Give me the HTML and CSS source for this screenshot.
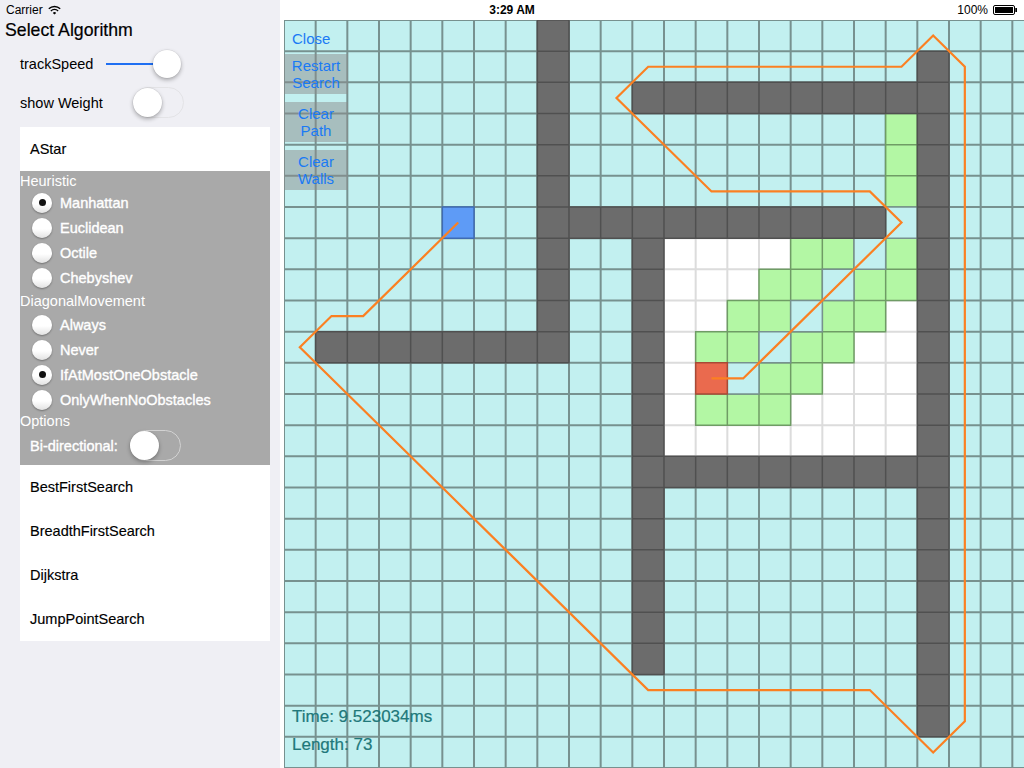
FILE: index.html
```html
<!DOCTYPE html>
<html lang="en">
<head>
<meta charset="utf-8">
<title>Select Algorithm</title>
<link rel="stylesheet" href="styles.css">
</head>
<body>
<div class="status">
  <div class="st-left">
    <span>Carrier</span>
    <svg class="wifi" width="13" height="10" viewBox="0 0 13 10">
      <path d="M6.5 9.6L4.8 7.9a2.4 2.4 0 0 1 3.4 0z" fill="#000"/>
      <path d="M2.9 5.9a5.1 5.1 0 0 1 7.2 0" fill="none" stroke="#000" stroke-width="1.4"/>
      <path d="M0.8 3.8a8.1 8.1 0 0 1 11.4 0" fill="none" stroke="#000" stroke-width="1.4"/>
    </svg>
  </div>
  <div class="st-time">3:29 AM</div>
  <div class="st-right">
    <span>100%</span>
    <svg width="25" height="10" viewBox="0 0 25 10">
      <rect x="0.5" y="0.5" width="21" height="9" rx="1.5" fill="none" stroke="#000"/>
      <rect x="2" y="2" width="18" height="6" fill="#000"/>
      <rect x="22.3" y="3" width="1.7" height="4" fill="#000"/>
    </svg>
  </div>
</div>

<div class="app">
  <aside class="sidebar">
    <h1 class="title">Select Algorithm</h1>
    <div class="ctl ctl-speed">
      <span class="lbl lbl-speed">trackSpeed</span>
      <div class="slider"><div class="slider-track"></div><div class="thumb"></div></div>
    </div>
    <div class="ctl ctl-weight">
      <span class="lbl lbl-weight">show Weight</span>
      <div class="switch"><div class="knob"></div></div>
    </div>

    <div class="card">
      <div class="algo">AStar</div>
      <div class="opts">
        <div class="sec sec-first">Heuristic</div>
        <div class="radio-row"><span class="radio on"></span><span class="opt">Manhattan</span></div>
        <div class="radio-row"><span class="radio"></span><span class="opt">Euclidean</span></div>
        <div class="radio-row"><span class="radio"></span><span class="opt">Octile</span></div>
        <div class="radio-row"><span class="radio"></span><span class="opt">Chebyshev</span></div>
        <div class="sec">DiagonalMovement</div>
        <div class="radio-row"><span class="radio"></span><span class="opt">Always</span></div>
        <div class="radio-row"><span class="radio"></span><span class="opt">Never</span></div>
        <div class="radio-row"><span class="radio on"></span><span class="opt">IfAtMostOneObstacle</span></div>
        <div class="radio-row"><span class="radio"></span><span class="opt">OnlyWhenNoObstacles</span></div>
        <div class="sec sec-last">Options</div>
        <div class="bi-row"><span class="opt bi-lbl">Bi-directional:</span><div class="switch switch-dark"><div class="knob"></div></div></div>
      </div>
      <div class="algo">BestFirstSearch</div>
      <div class="algo">BreadthFirstSearch</div>
      <div class="algo">Dijkstra</div>
      <div class="algo">JumpPointSearch</div>
    </div>
  </aside>

  <main class="main">
    <div class="board">
      <svg class="grid" viewBox="0 0 24 24" preserveAspectRatio="none">
        <rect class="c-empty" x="0" y="0" width="24" height="24"/>
        <path class="lines" d="M0 0V24M1 0V24M2 0V24M3 0V24M4 0V24M5 0V24M6 0V24M7 0V24M8 0V24M9 0V24M10 0V24M11 0V24M12 0V24M13 0V24M14 0V24M15 0V24M16 0V24M17 0V24M18 0V24M19 0V24M20 0V24M21 0V24M22 0V24M23 0V24M24 0V24M0 0H24M0 1H24M0 2H24M0 3H24M0 4H24M0 5H24M0 6H24M0 7H24M0 8H24M0 9H24M0 10H24M0 11H24M0 12H24M0 13H24M0 14H24M0 15H24M0 16H24M0 17H24M0 18H24M0 19H24M0 20H24M0 21H24M0 22H24M0 23H24M0 24H24"/>
        <path class="c-closed" d="M12 7h1v1h-1zM13 7h1v1h-1zM14 7h1v1h-1zM15 7h1v1h-1zM12 8h1v1h-1zM13 8h1v1h-1zM14 8h1v1h-1zM12 9h1v1h-1zM13 9h1v1h-1zM19 9h1v1h-1zM12 10h1v1h-1zM18 10h1v1h-1zM19 10h1v1h-1zM12 11h1v1h-1zM17 11h1v1h-1zM18 11h1v1h-1zM19 11h1v1h-1zM12 12h1v1h-1zM16 12h1v1h-1zM17 12h1v1h-1zM18 12h1v1h-1zM19 12h1v1h-1zM12 13h1v1h-1zM13 13h1v1h-1zM14 13h1v1h-1zM15 13h1v1h-1zM16 13h1v1h-1zM17 13h1v1h-1zM18 13h1v1h-1zM19 13h1v1h-1z"/>
        <path class="c-open" d="M19 3h1v1h-1zM19 4h1v1h-1zM19 5h1v1h-1zM16 7h1v1h-1zM17 7h1v1h-1zM19 7h1v1h-1zM15 8h1v1h-1zM16 8h1v1h-1zM18 8h1v1h-1zM19 8h1v1h-1zM14 9h1v1h-1zM15 9h1v1h-1zM17 9h1v1h-1zM18 9h1v1h-1zM13 10h1v1h-1zM14 10h1v1h-1zM16 10h1v1h-1zM17 10h1v1h-1zM15 11h1v1h-1zM16 11h1v1h-1zM13 12h1v1h-1zM14 12h1v1h-1zM15 12h1v1h-1z"/>
        <path class="c-path" d="M18 7h1v1h-1zM17 8h1v1h-1zM16 9h1v1h-1zM15 10h1v1h-1zM14 11h1v1h-1zM19 6h1v1h-1z"/>
        <path class="c-wall" d="M8 0h1v1h-1zM8 1h1v1h-1zM8 2h1v1h-1zM8 3h1v1h-1zM8 4h1v1h-1zM8 5h1v1h-1zM8 6h1v1h-1zM8 7h1v1h-1zM8 8h1v1h-1zM8 9h1v1h-1zM8 10h1v1h-1zM1 10h1v1h-1zM2 10h1v1h-1zM3 10h1v1h-1zM4 10h1v1h-1zM5 10h1v1h-1zM6 10h1v1h-1zM7 10h1v1h-1zM9 6h1v1h-1zM10 6h1v1h-1zM11 6h1v1h-1zM12 6h1v1h-1zM13 6h1v1h-1zM14 6h1v1h-1zM15 6h1v1h-1zM16 6h1v1h-1zM17 6h1v1h-1zM18 6h1v1h-1zM11 2h1v1h-1zM12 2h1v1h-1zM13 2h1v1h-1zM14 2h1v1h-1zM15 2h1v1h-1zM16 2h1v1h-1zM17 2h1v1h-1zM18 2h1v1h-1zM19 2h1v1h-1zM20 1h1v1h-1zM20 2h1v1h-1zM20 3h1v1h-1zM20 4h1v1h-1zM20 5h1v1h-1zM20 6h1v1h-1zM20 7h1v1h-1zM20 8h1v1h-1zM20 9h1v1h-1zM20 10h1v1h-1zM20 11h1v1h-1zM20 12h1v1h-1zM20 13h1v1h-1zM20 14h1v1h-1zM20 15h1v1h-1zM20 16h1v1h-1zM20 17h1v1h-1zM20 18h1v1h-1zM20 19h1v1h-1zM20 20h1v1h-1zM20 21h1v1h-1zM20 22h1v1h-1zM11 7h1v1h-1zM11 8h1v1h-1zM11 9h1v1h-1zM11 10h1v1h-1zM11 11h1v1h-1zM11 12h1v1h-1zM11 13h1v1h-1zM11 14h1v1h-1zM11 15h1v1h-1zM11 16h1v1h-1zM11 17h1v1h-1zM11 18h1v1h-1zM11 19h1v1h-1zM11 20h1v1h-1zM12 14h1v1h-1zM13 14h1v1h-1zM14 14h1v1h-1zM15 14h1v1h-1zM16 14h1v1h-1zM17 14h1v1h-1zM18 14h1v1h-1zM19 14h1v1h-1z"/>
        <rect class="c-start" x="5" y="6" width="1" height="1"/>
        <rect class="c-end" x="13" y="11" width="1" height="1"/>
        <polyline class="route" points="5.5,6.5 2.5,9.5 1.5,9.5 0.5,10.5 11.5,21.5 18.5,21.5 20.5,23.5 21.5,22.5 21.5,1.5 20.5,0.5 19.5,1.5 11.5,1.5 10.5,2.5 13.5,5.5 18.5,5.5 19.5,6.5 14.5,11.5 13.5,11.5"/>
      </svg>

      <div class="controls">
        <div class="close">Close</div>
        <div class="btn">Restart<br>Search</div>
        <div class="btn">Clear<br>Path</div>
        <div class="btn">Clear<br>Walls</div>
      </div>

      <div class="stats">
        <div>Time: 9.523034ms</div>
        <div>Length: 73</div>
      </div>
    </div>
  </main>
</div>
</body>
</html>
```

FILE: styles.css
```css
html, body {
  margin: 0;
  padding: 0;
}

body {
  width: 1024px;
  height: 768px;
  overflow: hidden;
  position: relative;
  font-family: "Liberation Sans", Arial, sans-serif;
  color: #000;
}

/* status bar */
.status {
  position: absolute;
  top: 0;
  left: 0;
  right: 0;
  height: 20px;
  display: flex;
  align-items: center;
  font-size: 12px;
  z-index: 3;
}

.st-left,
.st-right {
  flex: 1;
  display: flex;
  align-items: center;
}

.st-left {
  padding-left: 6px;
  gap: 5px;
}

.st-right {
  justify-content: flex-end;
  padding-right: 6px;
  gap: 5px;
}

.st-time {
  font-weight: bold;
}

.wifi {
  margin-top: -1px;
}

/* layout */
.app {
  display: flex;
  height: 768px;
}

.sidebar {
  width: 280px;
  flex: none;
  background: #efeff4;
  padding-top: 20px;
  box-sizing: border-box;
}

.main {
  flex: 1;
  background: #fff;
  padding: 20px 0 0 4px;
  overflow: hidden;
}

/* sidebar */
.title {
  margin: 0;
  padding-left: 5px;
  font-size: 17.7px;
  font-weight: normal;
  line-height: 20px;
  height: 20px;
  -webkit-text-stroke: 0.2px #000;
}

.ctl {
  display: flex;
  align-items: center;
  padding-left: 20px;
  font-size: 14.5px;
}

.ctl-speed {
  height: 28px;
  margin-top: 10px;
}

.ctl-weight {
  height: 31px;
  margin-top: 9px;
}

.lbl-speed {
  width: 86px;
}

.lbl-weight {
  width: 113px;
}

.slider {
  position: relative;
  width: 75px;
  height: 28px;
}

.slider-track {
  position: absolute;
  left: 0;
  top: 13px;
  width: 50px;
  height: 2px;
  background: #1f6ff2;
}

.thumb {
  position: absolute;
  right: 0;
  top: 0;
  width: 28px;
  height: 28px;
  border-radius: 50%;
  background: #fff;
  box-shadow: 0 2px 4px rgba(0, 0, 0, 0.3), 0 0 0 0.5px rgba(0, 0, 0, 0.08);
}

.switch {
  width: 51px;
  height: 31px;
  flex: none;
  box-sizing: border-box;
  border: 1.5px solid #e3e3e6;
  border-radius: 16px;
  display: flex;
  align-items: center;
}

.switch-dark {
  border-color: #d2d2d2;
}

.knob {
  width: 29px;
  height: 29px;
  margin-left: -1.5px;
  border-radius: 50%;
  background: #fff;
  box-shadow: 0 2px 4px rgba(0, 0, 0, 0.3), 0 0 0 0.5px rgba(0, 0, 0, 0.08);
}

.card {
  margin: 9px 0 0 20px;
  width: 250px;
  background: #fff;
}

.algo {
  height: 44px;
  display: flex;
  align-items: center;
  padding-left: 10px;
  font-size: 14.5px;
  -webkit-text-stroke: 0.15px #000;
}

.opts {
  background: #a9a9a9;
  color: #fff;
  font-size: 14.5px;
  padding-bottom: 4px;
}

.opt {
  -webkit-text-stroke: 0.35px #fff;
}

.sec {
  height: 22px;
  display: flex;
  align-items: center;
}

.sec-first {
  height: 19px;
}

.sec-last {
  height: 18px;
}

.radio-row {
  height: 25px;
  display: flex;
  align-items: center;
  padding-left: 12px;
  gap: 8px;
}

.radio {
  width: 20px;
  height: 20px;
  border-radius: 50%;
  background: linear-gradient(#fff 55%, #e2e2e2);
  box-shadow: 0 1px 2px rgba(0, 0, 0, 0.35);
  display: flex;
  align-items: center;
  justify-content: center;
}

.radio.on::after {
  content: "";
  width: 7px;
  height: 7px;
  border-radius: 50%;
  background: #111;
}

.bi-row {
  height: 31px;
  display: flex;
  align-items: center;
  padding-left: 10px;
}

.bi-lbl {
  width: 100px;
}

/* board */
.board {
  position: relative;
  width: 760px;
  height: 748px;
}

.grid {
  display: block;
  width: 760px;
  height: 748px;
}

.grid path,
.grid rect,
.grid polyline {
  vector-effect: non-scaling-stroke;
}

.c-empty {
  fill: #c2f0f0;
}

.lines {
  fill: none;
  stroke: #77918f;
  stroke-width: 2;
}

.c-closed {
  fill: #fff;
  stroke: #dcdcdc;
  stroke-width: 2;
}

.c-open {
  fill: #b3f7a4;
  stroke: #6f9c65;
  stroke-width: 1.5;
}

.c-path {
  fill: #c2f0f0;
  stroke: #77918f;
  stroke-width: 1.5;
}

.c-wall {
  fill: #6c6c6c;
  stroke: #505050;
  stroke-width: 1.5;
}

.c-start {
  fill: #5e9bf6;
  stroke: #3e6bb3;
  stroke-width: 1.5;
}

.c-end {
  fill: #ea6a4e;
  stroke: #a84a36;
  stroke-width: 1.5;
}

.route {
  fill: none;
  stroke: #fb8022;
  stroke-width: 2.2;
  stroke-linejoin: miter;
}

.controls {
  position: absolute;
  top: 0;
  left: 0;
  display: flex;
  flex-direction: column;
  font-size: 15px;
  color: #1a7af5;
}

.close {
  height: 34px;
  padding: 10px 0 0 8px;
  box-sizing: border-box;
  line-height: 18px;
}

.btn {
  width: 64px;
  height: 40px;
  box-sizing: border-box;
  padding-top: 2.5px;
  margin-bottom: 8px;
  text-align: center;
  line-height: 17px;
  background: rgba(140, 140, 140, 0.5);
}

.stats {
  position: absolute;
  left: 8px;
  bottom: 9px;
  font-size: 17px;
  line-height: 28px;
  color: #21787a;
  -webkit-text-stroke: 0.2px #21787a;
}
```
